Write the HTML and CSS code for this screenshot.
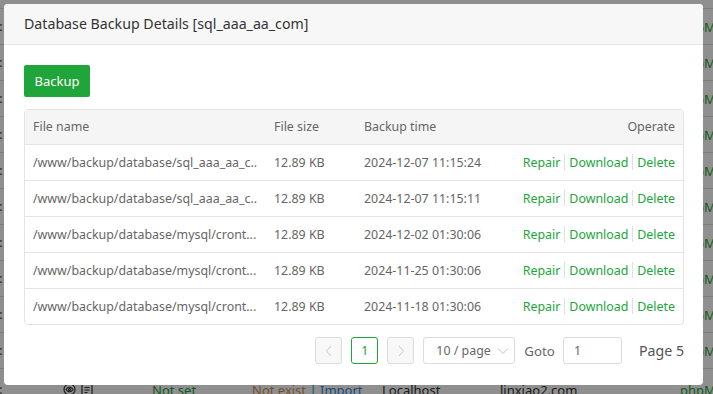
FILE: index.html
```html
<!DOCTYPE html>
<html lang="en">

<head>
    <meta charset="UTF-8">
    <meta name="viewport" content="width=device-width, initial-scale=1.0">
    <title>Database Backup Details</title>
    <link rel="stylesheet" href="styles.css">
</head>

<body>
    <!-- page behind the dialog -->
    <div class="page">
        <div class="page-top"></div>
        <div class="page-row"><span class="dots">::</span><span></span><span></span><span></span><span></span><span></span><span class="pma">phpMyAdmin</span></div>
        <div class="page-row"><span class="dots">::</span><span></span><span></span><span></span><span></span><span></span><span class="pma">phpMyAdmin</span></div>
        <div class="page-row"><span class="dots">::</span><span></span><span></span><span></span><span></span><span></span><span class="pma">phpMyAdmin</span></div>
        <div class="page-row"><span class="dots">::</span><span></span><span></span><span></span><span></span><span></span><span class="pma">phpMyAdmin</span></div>
        <div class="page-row"><span class="dots">::</span><span></span><span></span><span></span><span></span><span></span><span class="pma">phpMyAdmin</span></div>
        <div class="page-row"><span class="dots">::</span><span></span><span></span><span></span><span></span><span></span><span class="pma">phpMyAdmin</span></div>
        <div class="page-row"><span class="dots">::</span><span></span><span></span><span></span><span></span><span></span><span class="pma">phpMyAdmin</span></div>
        <div class="page-row"><span class="dots">::</span><span></span><span></span><span></span><span></span><span></span><span class="pma">phpMyAdmin</span></div>
        <div class="page-row"><span class="dots">::</span><span></span><span></span><span></span><span></span><span></span><span class="pma">phpMyAdmin</span></div>
        <div class="page-row"><span class="dots">::</span><span></span><span></span><span></span><span></span><span></span><span class="pma">phpMyAdmin</span></div>
        <div class="page-row last">
            <span class="dots">::</span>
            <span class="icons">
                <svg width="13" height="13" viewBox="0 0 13 13" fill="none" stroke="#333" stroke-width="1.2"><circle cx="6.5" cy="6.5" r="5.5"/><path d="M3 6.5c1-1.6 2.2-2.3 3.5-2.3S9 4.9 10 6.5C9 8.1 7.8 8.8 6.5 8.8S4 8.1 3 6.5z"/><circle cx="6.5" cy="6.5" r="1"/></svg>
                <svg width="12" height="13" viewBox="0 0 12 13" fill="none" stroke="#333" stroke-width="1.2"><rect x="1" y="1" width="10" height="11"/><path d="M3.5 4.5h5M3.5 7h5M3.5 9.5h3"/></svg>
            </span>
            <span class="green">Not set</span>
            <span><span class="orange">Not exist</span> <span class="blue">| Import</span></span>
            <span>Localhost</span>
            <span>linxiao2.com</span>
            <span class="pma">phpMyAdmin</span>
        </div>
    </div>

    <div class="mask"></div>

    <div class="dialog">
        <div class="dialog-head">Database Backup Details [sql_aaa_aa_com]</div>
        <div class="dialog-body">
            <button class="btn">Backup</button>

            <div class="table-box">
                <table class="table">
                    <colgroup>
                        <col class="c-name">
                        <col class="c-size">
                        <col class="c-time">
                        <col>
                    </colgroup>
                    <thead>
                        <tr>
                            <th>File name</th>
                            <th>File size</th>
                            <th>Backup time</th>
                            <th class="right">Operate</th>
                        </tr>
                    </thead>
                    <tbody>
                        <tr>
                            <td><div class="ellipsis">/www/backup/database/sql_aaa_aa_c...</div></td>
                            <td>12.89 KB</td>
                            <td>2024-12-07 11:15:24</td>
                            <td class="right ops"><a>Repair</a><i></i><a>Download</a><i></i><a>Delete</a></td>
                        </tr>
                        <tr>
                            <td><div class="ellipsis">/www/backup/database/sql_aaa_aa_c...</div></td>
                            <td>12.89 KB</td>
                            <td>2024-12-07 11:15:11</td>
                            <td class="right ops"><a>Repair</a><i></i><a>Download</a><i></i><a>Delete</a></td>
                        </tr>
                        <tr>
                            <td><div class="ellipsis">/www/backup/database/mysql/cront...</div></td>
                            <td>12.89 KB</td>
                            <td>2024-12-02 01:30:06</td>
                            <td class="right ops"><a>Repair</a><i></i><a>Download</a><i></i><a>Delete</a></td>
                        </tr>
                        <tr>
                            <td><div class="ellipsis">/www/backup/database/mysql/cront...</div></td>
                            <td>12.89 KB</td>
                            <td>2024-11-25 01:30:06</td>
                            <td class="right ops"><a>Repair</a><i></i><a>Download</a><i></i><a>Delete</a></td>
                        </tr>
                        <tr>
                            <td><div class="ellipsis">/www/backup/database/mysql/cront...</div></td>
                            <td>12.89 KB</td>
                            <td>2024-11-18 01:30:06</td>
                            <td class="right ops"><a>Repair</a><i></i><a>Download</a><i></i><a>Delete</a></td>
                        </tr>
                    </tbody>
                </table>
            </div>

            <div class="pager">
                <span class="pg-btn disabled">
                    <svg width="8" height="12" viewBox="0 0 8 12" fill="none" stroke="#c8c8c8" stroke-width="1"><path d="M6 1L1.5 6L6 11"/></svg>
                </span>
                <span class="pg-btn active">1</span>
                <span class="pg-btn disabled">
                    <svg width="8" height="12" viewBox="0 0 8 12" fill="none" stroke="#c8c8c8" stroke-width="1"><path d="M2 1L6.5 6L2 11"/></svg>
                </span>
                <span class="pg-select">10 / page
                    <svg width="12" height="8" viewBox="0 0 12 8" fill="none" stroke="#c0c0c0" stroke-width="1"><path d="M1 1.5L6 6.5L11 1.5"/></svg>
                </span>
                <span class="pg-goto">Goto</span>
                <span class="pg-input">1</span>
                <span class="pg-total">Page 5</span>
            </div>
        </div>
    </div>
</body>

</html>
```

FILE: styles.css
```css
* {
    margin: 0;
    padding: 0;
    box-sizing: border-box;
}

body {
    width: 713px;
    height: 394px;
    overflow: hidden;
    background: #fff;
    font-family: "Noto Sans", "Open Sans", sans-serif;
    font-size: 12.4px;
    color: #333;
}

/* page behind the dialog */
.page-top {
    height: 9px;
    border-bottom: 1px solid #ddd;
}

.page-row {
    height: 36px;
    border-bottom: 1px solid #ddd;
    display: grid;
    grid-template-columns: 63px 89px 100px 130px 118px 180px 1fr;
    align-items: center;
    white-space: nowrap;
    overflow: hidden;
    font-size: 13px;
}

.page-row.last {
    padding-top: 6px;
}

.page-row .dots {
    margin-left: -4px;
    color: #333;
    font-size: 12px;
}

.icons {
    display: flex;
    align-items: center;
    gap: 5px;
}

.green,
.pma {
    color: #20a53a;
}

.orange {
    color: #cf9250;
}

.blue {
    color: #2a8ad8;
}

.mask {
    position: fixed;
    inset: 0;
    background: rgba(0, 0, 0, 0.44);
}

/* dialog */
.dialog {
    position: absolute;
    left: 4px;
    top: 4px;
    width: 699px;
    height: 381px;
    background: #fff;
    border-radius: 4px;
    overflow: hidden;
}

.dialog-head {
    height: 41px;
    padding-left: 20px;
    background: #f7f7f7;
    border-bottom: 1px solid #e8e8e8;
    font-size: 14.2px;
    line-height: 40px;
    color: #333;
}

.dialog-body {
    padding: 20px 19px 20px 20px;
}

.btn {
    height: 32px;
    width: 66px;
    border: none;
    border-radius: 2px;
    background: #20a53a;
    color: #fff;
    font-family: inherit;
    font-size: 13px;
    cursor: pointer;
}

.table-box {
    margin-top: 12px;
    border: 1px solid #e4e4e4;
    border-radius: 4px;
    overflow: hidden;
}

.table {
    width: 100%;
    table-layout: fixed;
    border-collapse: collapse;
}

.c-name {
    width: 241px;
}

.c-size {
    width: 90px;
}

.c-time {
    width: 150px;
}

.table th,
.table td {
    padding: 0 8px;
    height: 36px;
    text-align: left;
    font-weight: normal;
    color: #666;
    white-space: nowrap;
    border-top: 1px solid #e4e4e4;
}

.table th {
    height: 34px;
    background: #f5f5f5;
    border-top: none;
}

.table .right {
    text-align: right;
}

.ellipsis {
    overflow: hidden;
    white-space: nowrap;
}

.ops a {
    color: #20a53a;
    cursor: pointer;
}

.ops i {
    display: inline-block;
    width: 1px;
    height: 16px;
    margin: 0 4px;
    background: #e0e0e0;
    vertical-align: -3px;
}

/* pager */
.pager {
    margin-top: 12px;
    display: flex;
    justify-content: flex-end;
    align-items: center;
    color: #666;
}

.pg-btn {
    width: 27px;
    height: 27px;
    margin-left: 9px;
    display: flex;
    align-items: center;
    justify-content: center;
    border: 1px solid #dcdcdc;
    border-radius: 3px;
    font-size: 12.4px;
}

.pg-btn.disabled {
    background: #f8f8f8;
}

.pg-btn.active {
    border-color: #20a53a;
    color: #20a53a;
    background: #fff;
}

.pg-select {
    width: 92px;
    height: 27px;
    margin-left: 9px;
    padding: 0 0 0 12px;
    display: flex;
    align-items: center;
    gap: 6px;
    border: 1px solid #dcdcdc;
    border-radius: 3px;
    color: #666;
}

.pg-goto {
    margin-left: 9px;
    font-size: 13.3px;
}

.pg-input {
    width: 59px;
    height: 27px;
    margin-left: 8px;
    padding-left: 10px;
    display: flex;
    align-items: center;
    border: 1px solid #dcdcdc;
    border-radius: 3px;
}

.pg-total {
    margin-left: 17px;
    font-size: 14.2px;
    color: #555;
}
```
